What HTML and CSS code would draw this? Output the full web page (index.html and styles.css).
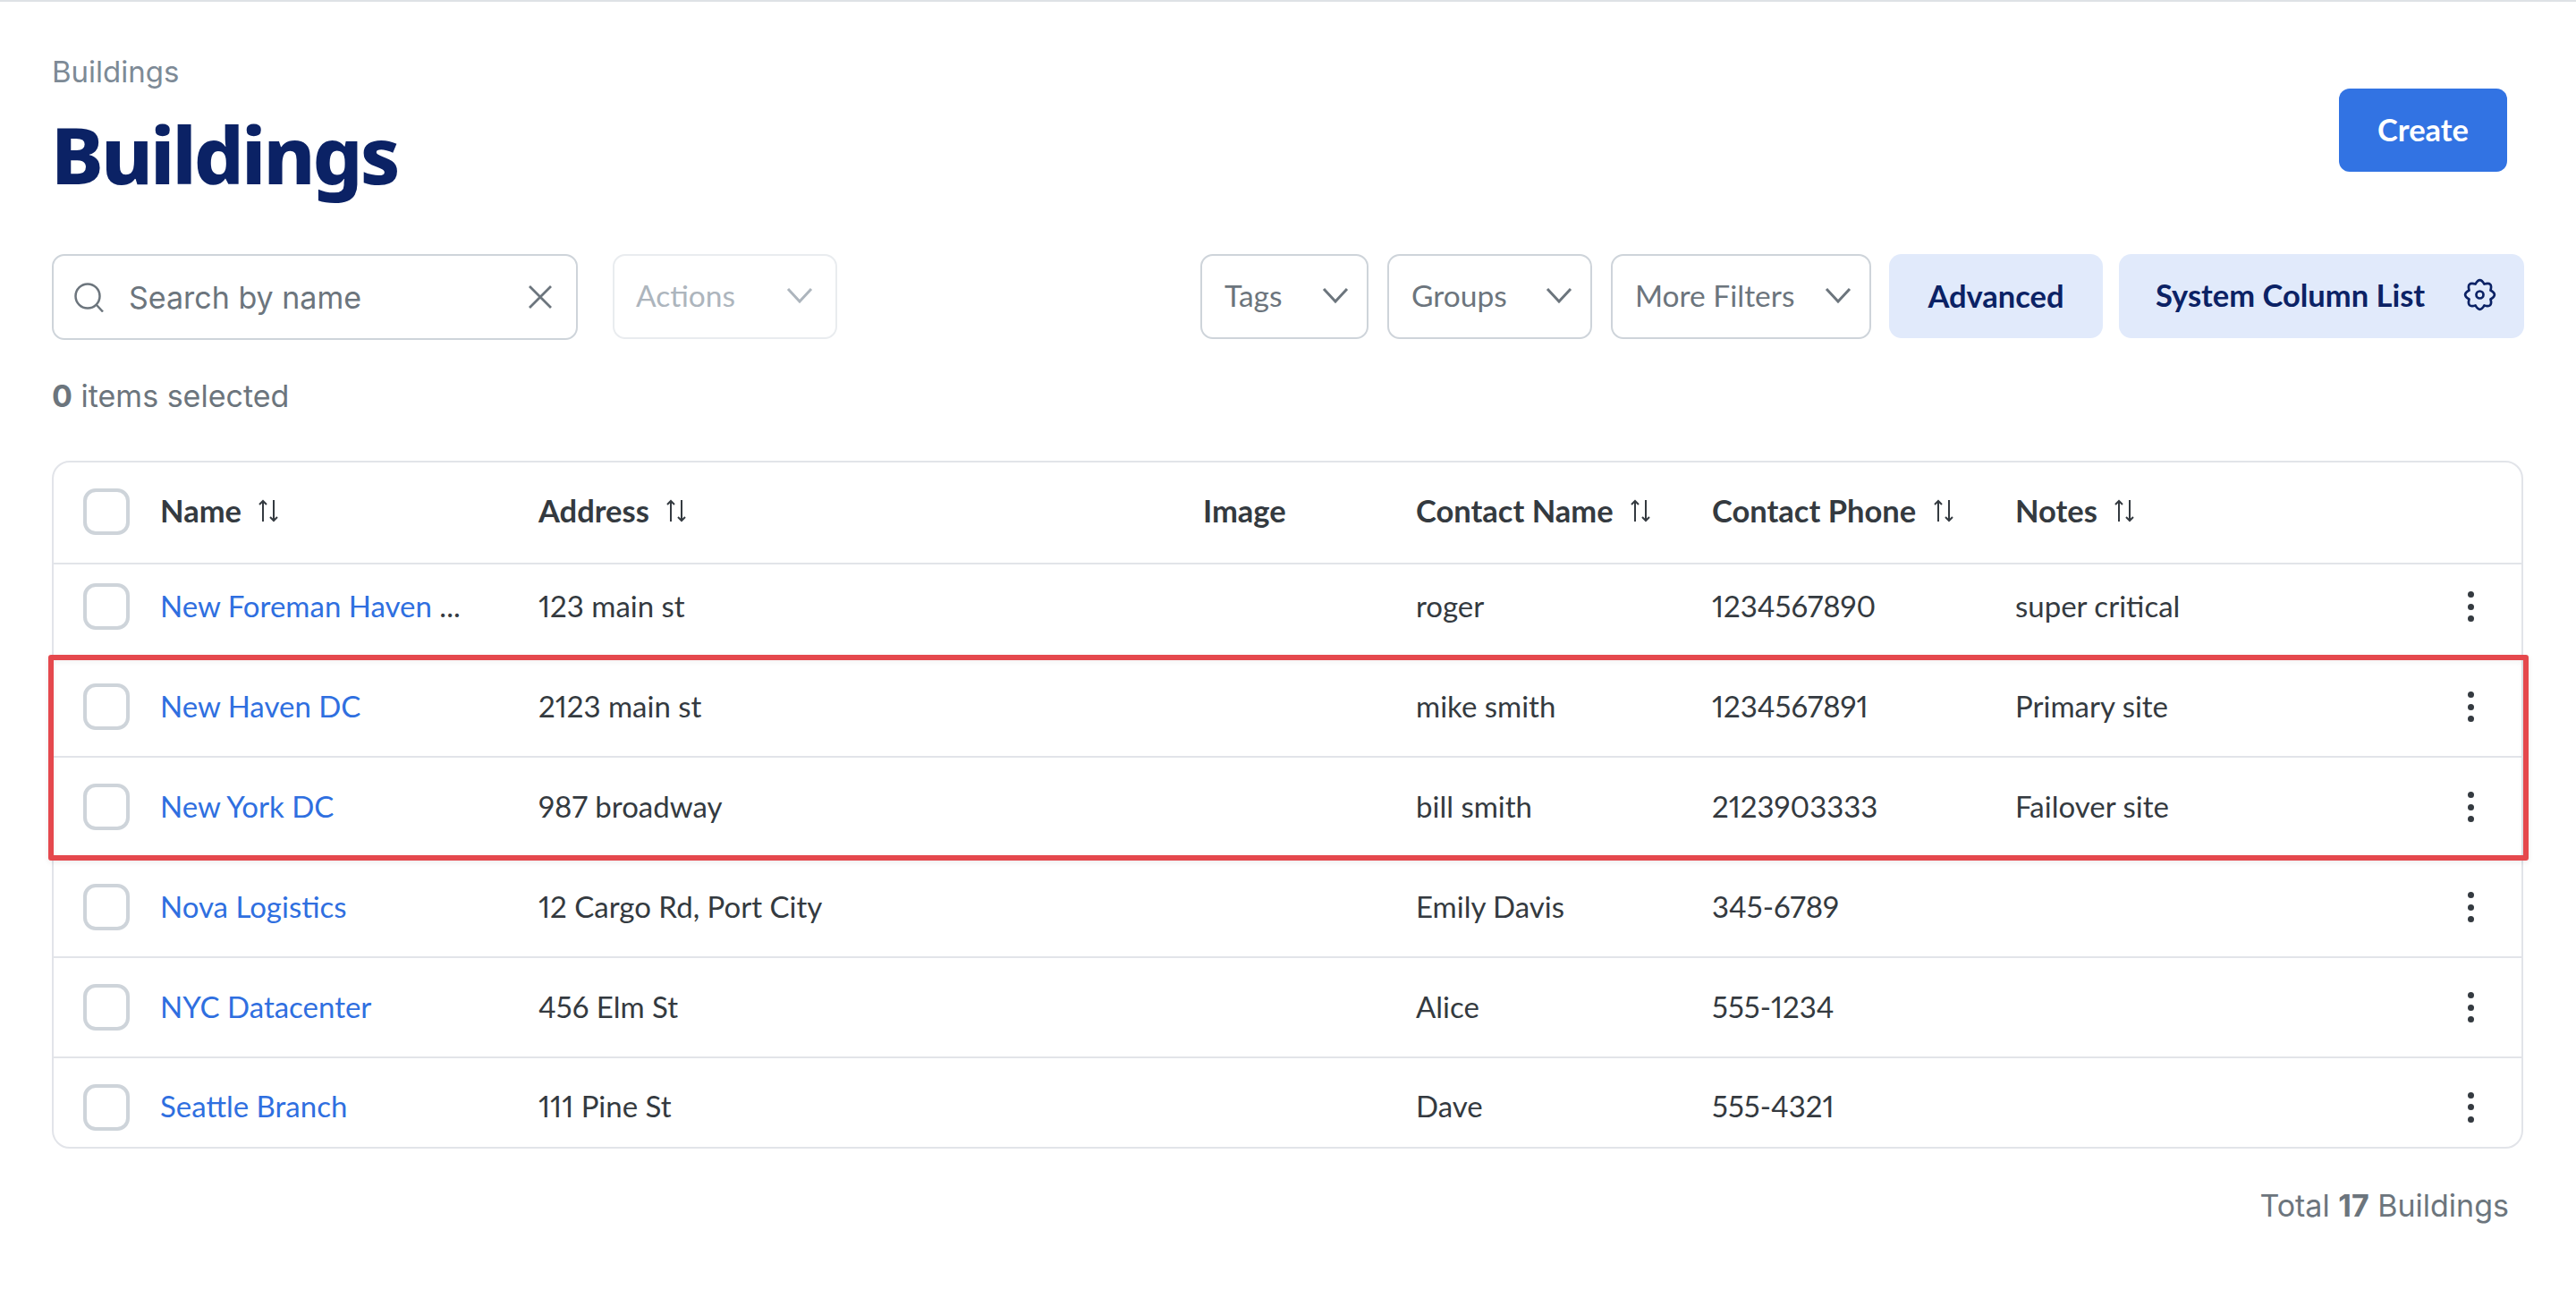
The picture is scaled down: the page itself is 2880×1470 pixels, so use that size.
FILE: index.html
```html
<!DOCTYPE html>
<html lang="en">
<head>
    <meta charset="UTF-8">
    <title>Buildings</title>
    <link rel="stylesheet" href="styles.css">
</head>
<body>
    <div class="page">
        <div class="page-head">
            <div>
                <div class="crumb">Buildings</div>
                <h1 class="title">Buildings</h1>
            </div>
            <button class="btn-create">Create</button>
        </div>

        <div class="toolbar">
            <div class="search">
                <svg class="search-icon" viewBox="0 0 33 33" fill="none"><circle cx="15" cy="15" r="13.500" stroke="#6c757d" stroke-width="2.500"/><path d="M25 25l7 7.500" stroke="#6c757d" stroke-width="2.500"/></svg>
                <span class="search-text">Search by name</span>
                <svg class="clear-icon" viewBox="0 0 28 28" fill="none"><path d="M2 2l24 24M26 2L2 26" stroke="#6c757d" stroke-width="2.800"/></svg>
            </div>
            <div class="select select-muted actions">
                <span>Actions</span>
                <svg class="chevron" viewBox="0 0 30 18" fill="none"><path d="M2 2l13 14L28 2" stroke="currentColor" stroke-width="3"/></svg>
            </div>
            <div class="spacer"></div>
            <div class="select tags">
                <span>Tags</span>
                <svg class="chevron" viewBox="0 0 30 18" fill="none"><path d="M2 2l13 14L28 2" stroke="currentColor" stroke-width="3"/></svg>
            </div>
            <div class="select groups">
                <span>Groups</span>
                <svg class="chevron" viewBox="0 0 30 18" fill="none"><path d="M2 2l13 14L28 2" stroke="currentColor" stroke-width="3"/></svg>
            </div>
            <div class="select more">
                <span>More Filters</span>
                <svg class="chevron" viewBox="0 0 30 18" fill="none"><path d="M2 2l13 14L28 2" stroke="currentColor" stroke-width="3"/></svg>
            </div>
            <button class="btn-soft advanced">Advanced</button>
            <button class="btn-soft columns">
                <span>System Column List</span>
                <svg class="gear" viewBox="0 0 24 24" fill="none" stroke="#0b2265" stroke-width="1.750" stroke-linejoin="round"><circle cx="12" cy="12" r="2.600"/><path d="M19.760 8.790Q25.500 12 19.760 15.210Q21.550 21.550 15.210 19.760Q12 25.500 8.790 19.760Q2.450 21.550 4.240 15.210Q-1.500 12 4.240 8.790Q2.450 2.450 8.790 4.240Q12 -1.500 15.210 4.240Q21.550 2.450 19.760 8.790Z"/></svg>
            </button>
        </div>

        <div class="selected"><b>0</b> items selected</div>

        <div class="table-wrap">
            <div class="table">
                <div class="row row-head">
                    <div class="cell col-check"><span class="check"></span></div>
                    <div class="cell col-name">Name <svg class="sort" viewBox="0 0 22 26" fill="none"><path d="M5 25V2M1 6l4-4 4 4M17 1v23M13 20l4 4 4-4" stroke="#343a40" stroke-width="2"/></svg></div>
                    <div class="cell col-address">Address <svg class="sort" viewBox="0 0 22 26" fill="none"><path d="M5 25V2M1 6l4-4 4 4M17 1v23M13 20l4 4 4-4" stroke="#343a40" stroke-width="2"/></svg></div>
                    <div class="cell col-image">Image</div>
                    <div class="cell col-contact">Contact Name <svg class="sort" viewBox="0 0 22 26" fill="none"><path d="M5 25V2M1 6l4-4 4 4M17 1v23M13 20l4 4 4-4" stroke="#343a40" stroke-width="2"/></svg></div>
                    <div class="cell col-phone">Contact Phone <svg class="sort" viewBox="0 0 22 26" fill="none"><path d="M5 25V2M1 6l4-4 4 4M17 1v23M13 20l4 4 4-4" stroke="#343a40" stroke-width="2"/></svg></div>
                    <div class="cell col-notes">Notes <svg class="sort" viewBox="0 0 22 26" fill="none"><path d="M5 25V2M1 6l4-4 4 4M17 1v23M13 20l4 4 4-4" stroke="#343a40" stroke-width="2"/></svg></div>
                </div>
                <div class="row row-first">
                    <div class="cell col-check"><span class="check"></span></div>
                    <div class="cell col-name"><a class="link">New Foreman Haven</a> ...</div>
                    <div class="cell col-address">123 main st</div>
                    <div class="cell col-image"></div>
                    <div class="cell col-contact">roger</div>
                    <div class="cell col-phone">1234567890</div>
                    <div class="cell col-notes">super critical</div>
                    <div class="cell col-menu"><span class="dots"><i></i><i></i><i></i></span></div>
                </div>
                <div class="row">
                    <div class="cell col-check"><span class="check"></span></div>
                    <div class="cell col-name"><a class="link">New Haven DC</a></div>
                    <div class="cell col-address">2123 main st</div>
                    <div class="cell col-image"></div>
                    <div class="cell col-contact">mike smith</div>
                    <div class="cell col-phone">1234567891</div>
                    <div class="cell col-notes">Primary site</div>
                    <div class="cell col-menu"><span class="dots"><i></i><i></i><i></i></span></div>
                </div>
                <div class="row">
                    <div class="cell col-check"><span class="check"></span></div>
                    <div class="cell col-name"><a class="link">New York DC</a></div>
                    <div class="cell col-address">987 broadway</div>
                    <div class="cell col-image"></div>
                    <div class="cell col-contact">bill smith</div>
                    <div class="cell col-phone">2123903333</div>
                    <div class="cell col-notes">Failover site</div>
                    <div class="cell col-menu"><span class="dots"><i></i><i></i><i></i></span></div>
                </div>
                <div class="row">
                    <div class="cell col-check"><span class="check"></span></div>
                    <div class="cell col-name"><a class="link">Nova Logistics</a></div>
                    <div class="cell col-address">12 Cargo Rd, Port City</div>
                    <div class="cell col-image"></div>
                    <div class="cell col-contact">Emily Davis</div>
                    <div class="cell col-phone">345-6789</div>
                    <div class="cell col-notes"></div>
                    <div class="cell col-menu"><span class="dots"><i></i><i></i><i></i></span></div>
                </div>
                <div class="row">
                    <div class="cell col-check"><span class="check"></span></div>
                    <div class="cell col-name"><a class="link">NYC Datacenter</a></div>
                    <div class="cell col-address">456 Elm St</div>
                    <div class="cell col-image"></div>
                    <div class="cell col-contact">Alice</div>
                    <div class="cell col-phone">555-1234</div>
                    <div class="cell col-notes"></div>
                    <div class="cell col-menu"><span class="dots"><i></i><i></i><i></i></span></div>
                </div>
                <div class="row row-last">
                    <div class="cell col-check"><span class="check"></span></div>
                    <div class="cell col-name"><a class="link">Seattle Branch</a></div>
                    <div class="cell col-address">111 Pine St</div>
                    <div class="cell col-image"></div>
                    <div class="cell col-contact">Dave</div>
                    <div class="cell col-phone">555-4321</div>
                    <div class="cell col-notes"></div>
                    <div class="cell col-menu"><span class="dots"><i></i><i></i><i></i></span></div>
                </div>
            </div>
            <div class="highlight"></div>
        </div>

        <div class="total">Total <b>17</b> Buildings</div>
    </div>
</body>
</html>
```

FILE: styles.css
```css
* {
    box-sizing: border-box;
}
body {
    margin: 0;
    background: #ffffff;
    font-family: Inter, sans-serif;
    color: #343a40;
}
.page {
    border-top: 2px solid #dee2e6;
    padding: 0 58px 0 58px;
}
.page-head {
    display: flex;
    justify-content: space-between;
    align-items: flex-start;
    padding-right: 19px;
}
.crumb {
    margin-top: 59px;
    font-size: 33px;
    line-height: 38px;
    color: #7d8a96;
}
.title {
    margin: 23px 0 0 -1px;
    font-family: "Noto Sans", sans-serif;
    font-size: 88px;
    line-height: 100px;
    font-weight: 800;
    letter-spacing: -2.900px;
    color: #0b2265;
}
.btn-create {
    margin-top: 97px;
    width: 188px;
    height: 93px;
    border: none;
    border-radius: 12px;
    padding: 0 0 2px 0;
    background: #3273e3;
    color: #ffffff;
    font-family: Lato, sans-serif;
    font-size: 34.500px;
    font-weight: 700;
}
.toolbar {
    display: flex;
    align-items: flex-start;
    margin-top: 62px;
}
.search {
    display: flex;
    align-items: center;
    width: 588px;
    height: 96px;
    border: 2px solid #ced4da;
    border-radius: 14px;
    padding: 0 26px 0 23px;
}
.search-icon {
    width: 33px;
    height: 33px;
}
.search-text {
    flex: 1;
    margin-left: 28px;
    font-size: 34px;
    color: #6c757d;
}
.clear-icon {
    width: 28px;
    height: 28px;
}
.select {
    display: flex;
    align-items: center;
    justify-content: space-between;
    height: 95px;
    border: 2px solid #ced4da;
    border-radius: 14px;
    padding: 0 20px 3px 25px;
    font-family: Lato, sans-serif;
    font-size: 33.500px;
    color: #6c757d;
}
.select-muted {
    border-color: #e9ecef;
    color: #adb5bd;
}
.chevron {
    width: 30px;
    height: 18px;
}
.actions {
    width: 251px;
    margin-left: 39px;
    padding-left: 24px;
    padding-right: 25px;
}
.spacer {
    flex: 1;
}
.tags {
    width: 188px;
}
.groups {
    width: 229px;
    margin-left: 21px;
}
.more {
    width: 291px;
    margin-left: 21px;
}
.btn-soft {
    height: 94px;
    border: none;
    border-radius: 14px;
    padding-bottom: 3px;
    background: #e1eafb;
    color: #0b2265;
    font-family: Lato, sans-serif;
    font-size: 34.500px;
    font-weight: 700;
}
.advanced {
    width: 239px;
    margin-left: 20px;
}
.columns {
    display: flex;
    align-items: center;
    justify-content: space-between;
    width: 453px;
    margin-left: 18px;
    padding: 0 31px 3px 41px;
}
.gear {
    width: 37px;
    height: 37px;
    overflow: visible;
}
.selected {
    margin-top: 41px;
    font-size: 34px;
    line-height: 44px;
    color: #6c757d;
}
.table-wrap {
    position: relative;
    margin-top: 50px;
    width: 2763px;
}
.table {
    border: 2px solid #e2e4e9;
    border-radius: 20px;
    font-family: Lato, sans-serif;
    font-size: 33px;
    font-variant-numeric: proportional-nums;
}
.row {
    display: flex;
    align-items: center;
    height: 112px;
    border-bottom: 2px solid #e2e4e9;
}
.row-head {
    height: 114px;
    padding-bottom: 2px;
    font-size: 34.500px;
    font-weight: 700;
}
.row-first {
    height: 104px;
    padding-bottom: 8px;
}
.row-last {
    height: 99px;
    padding-top: 10px;
    border-bottom: none;
}
.cell {
    display: flex;
    align-items: center;
    white-space: pre;
    padding-bottom: 3px;
}
.col-check {
    width: 119px;
    padding-left: 33px;
    padding-bottom: 0;
}
.col-name {
    width: 423px;
}
.col-address {
    width: 743px;
}
.col-image {
    width: 238px;
}
.col-contact {
    width: 331px;
}
.col-phone {
    width: 339px;
}
.col-notes {
    width: 506px;
}
.col-menu {
    width: 40px;
    padding-bottom: 0;
}
.check {
    display: block;
    width: 52px;
    height: 52px;
    border: 4px solid #ced4da;
    border-radius: 14px;
}
.link {
    color: #2f6fe0;
}
.sort {
    width: 22px;
    height: 26px;
    margin-left: 11px;
}
.dots {
    display: flex;
    flex-direction: column;
    gap: 6.500px;
}
.dots i {
    display: block;
    width: 7px;
    height: 7px;
    border-radius: 50%;
    background: #343a40;
}
.highlight {
    position: absolute;
    left: -4px;
    right: -6px;
    top: 217px;
    height: 230px;
    border: 6px solid #e5484d;
    border-radius: 3px;
    box-shadow: 0 2px 6px rgba(0, 0, 0, 0.08), inset 0 2px 6px rgba(0, 0, 0, 0.05);
}
.total {
    margin-top: 42px;
    padding-right: 17px;
    text-align: right;
    font-size: 34px;
    line-height: 44px;
    color: #6c757d;
}
.total b,
.selected b {
    font-weight: 700;
}
```
